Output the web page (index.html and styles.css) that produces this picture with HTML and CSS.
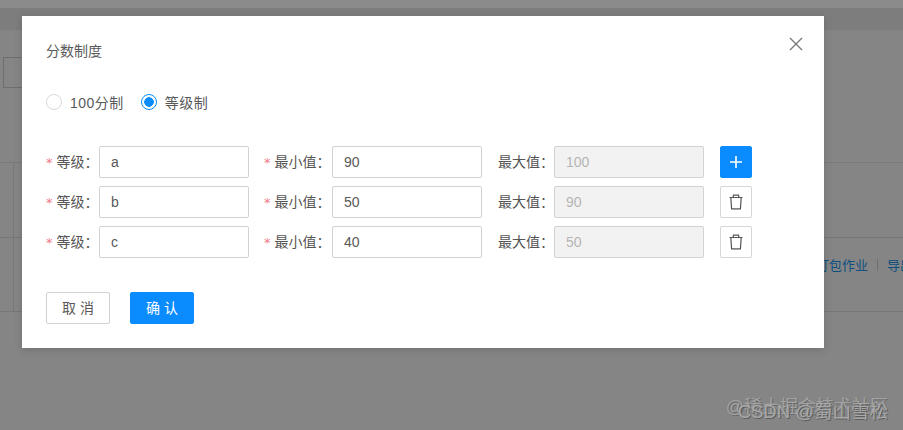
FILE: index.html
```html
<!DOCTYPE html>
<html>
<head>
    <title>分数制度</title>
    <meta charset="utf-8">
    <link rel="stylesheet" href="styles.css">
</head>
<body>
    <div class="page">
        <div class="page-top"></div>
        <div class="page-band"></div>
        <div class="page-tools"><div class="page-input"></div></div>
        <div class="page-head"></div>
        <div class="page-row">
            <span class="page-link">打包作业</span>
            <span class="page-sep"></span>
            <span class="page-link">导出</span>
        </div>
        <div class="page-rest"></div>
    </div>

    <div class="watermark">
        <div class="mark-back">@稀土掘金技术社区</div>
        <div class="mark-front">CSDN @蜀山雪松</div>
    </div>

    <div class="modal">
        <h2 class="modal-title">分数制度</h2>
        <svg class="modal-close" width="14" height="14" viewBox="0 0 14 14">
            <path d="M1 1L13 13M13 1L1 13" stroke="#777" stroke-width="1.3" fill="none"/>
        </svg>

        <div class="radios">
            <label class="radio"><span class="radio-dot"></span>100分制</label>
            <label class="radio radio-on"><span class="radio-dot"></span>等级制</label>
        </div>

        <div class="rows">
            <div class="row">
                <span class="label label-grade"><i>*</i>等级：</span>
                <input class="field" value="a">
                <span class="label label-min"><i>*</i>最小值：</span>
                <input class="field" value="90">
                <span class="label label-max">最大值：</span>
                <input class="field" value="100" disabled>
                <button class="icon-btn icon-add">
                    <svg width="14" height="14" viewBox="0 0 14 14"><path d="M7 1V13M1 7H13" stroke="#fff" stroke-width="1.6" fill="none"/></svg>
                </button>
            </div>
            <div class="row">
                <span class="label label-grade"><i>*</i>等级：</span>
                <input class="field" value="b">
                <span class="label label-min"><i>*</i>最小值：</span>
                <input class="field" value="50">
                <span class="label label-max">最大值：</span>
                <input class="field" value="90" disabled>
                <button class="icon-btn">
                    <svg width="14" height="16" viewBox="0 0 14 16"><path d="M0.500 3.500H13.500M4 3.500L4.500 1.200H9.500L10 3.500M1.800 3.500L2.600 14.800H11.400L12.200 3.500" stroke="#555" stroke-width="1.200" fill="none"/></svg>
                </button>
            </div>
            <div class="row">
                <span class="label label-grade"><i>*</i>等级：</span>
                <input class="field" value="c">
                <span class="label label-min"><i>*</i>最小值：</span>
                <input class="field" value="40">
                <span class="label label-max">最大值：</span>
                <input class="field" value="50" disabled>
                <button class="icon-btn">
                    <svg width="14" height="16" viewBox="0 0 14 16"><path d="M0.500 3.500H13.500M4 3.500L4.500 1.200H9.500L10 3.500M1.800 3.500L2.600 14.800H11.400L12.200 3.500" stroke="#555" stroke-width="1.200" fill="none"/></svg>
                </button>
            </div>
        </div>

        <div class="actions">
            <button class="btn">取 消</button>
            <button class="btn btn-primary">确 认</button>
        </div>
    </div>
</body>
</html>
```

FILE: styles.css
```css
* {
    box-sizing: border-box;
}

body {
    margin: 0;
    height: 430px;
    overflow: hidden;
    background-color: #858585;
    font-family: 'Liberation Sans', 'Noto Sans CJK SC', sans-serif;
    font-size: 14px;
    color: #595959;
}

.page-top {
    height: 8px;
    background-color: #8b8b8b;
}

.page-band {
    height: 22px;
    background-color: #7d7d7d;
}

.page-tools {
    height: 133px;
    padding-top: 27px;
    border-bottom: 1px solid #7a7a7a;
}

.page-input {
    width: 40px;
    height: 31px;
    margin-left: 3px;
    border: 1px solid #6e6e6e;
}

.page-head {
    height: 75px;
    border-bottom: 1px solid #777;
    background: linear-gradient(#787878, #787878) 13px 0 / 1px 100% no-repeat;
}

.page-row {
    height: 74px;
    border-bottom: 1px solid #777;
    display: flex;
    align-items: center;
    justify-content: flex-end;
    gap: 9px;
    margin-right: -10px;
    padding-bottom: 20px;
    color: #0d4f7f;
    font-size: 13px;
    background: linear-gradient(#787878, #787878) 13px 0 / 1px 100% no-repeat;
}

.page-sep {
    width: 1px;
    height: 12px;
    background-color: #6f6f6f;
}

.watermark {
    position: absolute;
    right: 15px;
    bottom: 8px;
    text-align: right;
    color: #a8a8a8;
    font-size: 18.500px;
    line-height: 20px;
}

.mark-back {
    position: absolute;
    right: 0;
    bottom: 5px;
    white-space: nowrap;
    font-size: 18px;
    color: #a2a2a2;
    text-shadow: 1px 1px 0 #6a6a6a;
}

.mark-front {
    white-space: nowrap;
    position: relative;
    text-shadow: 1px 1px 0 #5e5e5e;
}

.modal {
    position: absolute;
    left: 22px;
    top: 16px;
    width: 802px;
    height: 332px;
    padding: 24px;
    background-color: #fff;
    box-shadow: 0 2px 8px rgba(0, 0, 0, 0.15);
}

.modal-title {
    margin: 0;
    font-size: 14px;
    font-weight: normal;
    line-height: 22px;
}

.modal-close {
    position: absolute;
    top: 21px;
    right: 21px;
}

.radios {
    display: flex;
    gap: 17px;
    margin-top: 28px;
    height: 24px;
    align-items: center;
}

.radio {
    display: flex;
    align-items: center;
    gap: 8px;
    letter-spacing: 0.5px;
}

.radio-dot {
    width: 16px;
    height: 16px;
    border: 1px solid #d9d9d9;
    border-radius: 50%;
}

.radio-on .radio-dot {
    border-color: #0a8cff;
    background: radial-gradient(circle, #0a8cff 0 4.500px, #fff 5px);
}

.rows {
    display: flex;
    flex-direction: column;
    gap: 8px;
    margin-top: 32px;
}

.row {
    display: flex;
    align-items: center;
    height: 32px;
}

.label {
    color: #555;
    white-space: nowrap;
    padding-bottom: 2px;
}

.label i {
    color: #f0788a;
    font-style: normal;
    margin-right: 4px;
    font-family: 'DejaVu Sans', sans-serif;
    font-size: 13px;
}

.label-grade {
    width: 53px;
}

.label-min {
    width: 68px;
    margin-left: 15px;
}

.label-max {
    width: 56px;
    margin-left: 16px;
}

.field {
    width: 150px;
    height: 32px;
    padding: 0 11px;
    border: 1px solid #d2d2d2;
    border-radius: 2px;
    background-color: #fff;
    font-family: inherit;
    font-size: 14px;
    color: #595959;
}

.field:disabled {
    background-color: #f2f2f2;
    color: #b5b5b5;
}

.icon-btn {
    width: 32px;
    height: 32px;
    margin-left: 16px;
    padding: 0;
    display: flex;
    align-items: center;
    justify-content: center;
    background-color: #fff;
    border: 1px solid #d6d6d6;
    border-radius: 2px;
}

.icon-add {
    background-color: #0a8cff;
    border-color: #0a8cff;
}

.actions {
    display: flex;
    gap: 20px;
    margin-top: 34px;
}

.btn {
    width: 64px;
    height: 32px;
    padding: 0 0 2px;
    background-color: #fff;
    border: 1px solid #d2d2d2;
    border-radius: 2px;
    font-family: inherit;
    font-size: 14px;
    color: #595959;
}

.btn-primary {
    background-color: #0a8cff;
    border-color: #0a8cff;
    color: #fff;
}
```
